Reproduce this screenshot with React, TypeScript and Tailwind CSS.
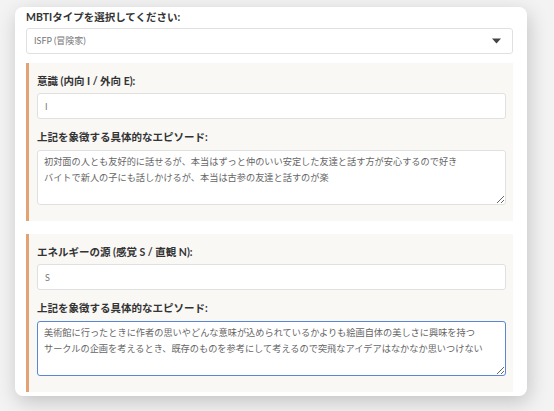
import { useState } from 'react';

const sections = [
  {
    label: '意識 (内向 I / 外向 E):',
    value: 'I',
    episode:
      '初対面の人とも友好的に話せるが、本当はずっと仲のいい安定した友達と話す方が安心するので好き\nバイトで新人の子にも話しかけるが、本当は古参の友達と話すのが楽',
    focused: false,
  },
  {
    label: 'エネルギーの源 (感覚 S / 直観 N):',
    value: 'S',
    episode:
      '美術館に行ったときに作者の思いやどんな意味が込められているかよりも絵画自体の美しさに興味を持つ\nサークルの企画を考えるとき、既存のものを参考にして考えるので突飛なアイデアはなかなか思いつけない',
    focused: true,
  },
];

export default function App() {
  const [mbti, setMbti] = useState('ISFP');

  return (
    <div className="h-[411px] w-[554px] overflow-hidden bg-[#f3f3f3] pl-[15px] pt-[7px] font-['Lato','Noto_Sans_CJK_JP',sans-serif]">
      <div className="h-[389px] w-[512px] overflow-hidden rounded-lg bg-white pl-[11px] pr-[14px] pt-[3px] shadow-[2px_6px_20px_rgba(0,0,0,0.2)]">
        <label className="mb-[4px] block text-[10.5px] leading-[14px] font-bold text-[#333]">
          MBTIタイプを選択してください:
        </label>
        <div className="relative">
          <select
            value={mbti}
            onChange={(e) => setMbti(e.target.value)}
            className="block h-[26px] w-full appearance-none rounded-[3px] border border-[#e0e0e0] bg-white pl-[7px] text-[9px] text-[#777] outline-none"
          >
            <option value="ISFP">ISFP (冒険家)</option>
            <option value="INFP">INFP (仲介者)</option>
          </select>
          <svg
            className="pointer-events-none absolute right-[12px] top-[10px]"
            width="9"
            height="6"
            viewBox="0 0 9 6"
          >
            <path d="M0 0.5h9L4.5 5.5z" fill="#444" />
          </svg>
        </div>

        <div className="mt-[9px] flex flex-col gap-[13px]">
          {sections.map((s) => (
            <div
              key={s.label}
              className="border-l-[3px] border-[#e2a274] bg-[#f9f8f5] pb-[16px] pl-[8px] pr-[7px] pt-[11px]"
            >
              <label className="mb-[5px] block text-[10.5px] leading-[14px] font-bold text-[#333]">
                {s.label}
              </label>
              <input
                defaultValue={s.value}
                className="block h-[26px] w-full rounded-[3px] border border-[#e0e0e0] bg-white pl-[7px] text-[9px] text-[#777] outline-none"
              />
              <label className="mb-[6px] mt-[11px] block text-[10.5px] leading-[14px] font-bold text-[#333]">
                上記を象徴する具体的なエピソード:
              </label>
              <textarea
                defaultValue={s.episode}
                className={`block h-[55px] w-full rounded-[3px] bg-white px-[6px] pt-[2px] font-['Noto_Sans_CJK_JP',sans-serif] text-[9.2px] leading-[16px] text-[#666] outline-none ${
                  s.focused ? 'border-[1.5px] border-[#5a86d6]' : 'border border-[#e0e0e0]'
                }`}
              />
            </div>
          ))}
        </div>
      </div>
    </div>
  );
}
